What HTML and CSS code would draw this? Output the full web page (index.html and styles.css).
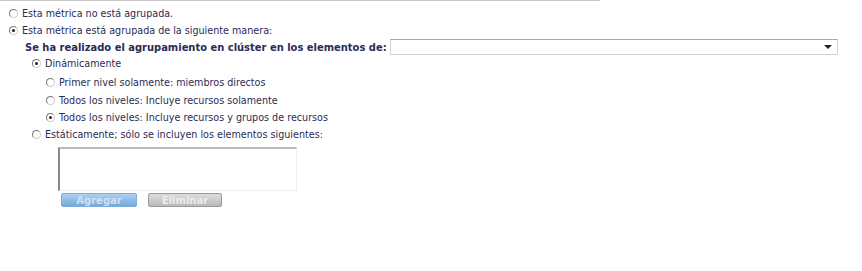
FILE: index.html
```html
<!DOCTYPE html>
<html>
<head>
<meta charset="utf-8">
<link rel="stylesheet" href="styles.css">
</head>
<body>
<div class="page">
  <div class="topline"></div>
  <div class="row r1"><span class="radio"></span><span class="lbl">Esta métrica no está agrupada.</span></div>
  <div class="row r2"><span class="radio on"></span><span class="lbl">Esta métrica está agrupada de la siguiente manera:</span></div>
  <div class="row r3"><span class="bold">Se ha realizado el agrupamiento en clúster en los elementos de:</span>
    <div class="select"><span class="arrow"></span></div>
  </div>
  <div class="row r4"><span class="radio on"></span><span class="lbl blue">Dinámicamente</span></div>
  <div class="row r5"><span class="radio"></span><span class="lbl blue">Primer nivel solamente: miembros directos</span></div>
  <div class="row r6"><span class="radio"></span><span class="lbl blue">Todos los niveles: Incluye recursos solamente</span></div>
  <div class="row r7"><span class="radio on"></span><span class="lbl blue">Todos los niveles: Incluye recursos y grupos de recursos</span></div>
  <div class="row r8"><span class="radio"></span><span class="lbl blue">Estáticamente; sólo se incluyen los elementos siguientes:</span></div>
  <div class="textarea"></div>
  <div class="buttons">
    <span class="btn add">Agregar</span>
    <span class="btn del">Eliminar</span>
  </div>
</div>
</body>
</html>
```
FILE: styles.css
```css
html, body { margin: 0; padding: 0; background: #fff; }
body { font-family: "DejaVu Sans", sans-serif; font-size: 9.6px; color: #2b2b55; }
.page { width: 862px; height: 271px; position: relative; }
.topline { width: 600px; height: 1px; background: #c8c8c8; margin-bottom: 4px; }
.row { display: flex; align-items: center; height: 17px; }
.r1 { padding-left: 9px; }
.r2 { padding-left: 9px; }
.r3 { padding-left: 25px; height: 16px; }
.r4 { padding-left: 32px; }
.r5, .r6, .r7 { padding-left: 46px; }
.r5 { margin-top: 2px; }
.r6 { height: 18px; }
.r8 { padding-left: 32px; height: 16px; }
.radio { width: 7px; height: 7px; border: 1px solid #888; border-radius: 50%; box-sizing: content-box; position: relative; margin-right: 4px; background: #fff; border-color: #777 #ccc #ccc #777; }
.radio.on::after { content: ""; position: absolute; left: 2px; top: 2px; width: 3px; height: 3px; border-radius: 50%; background: #222; }
.lbl { white-space: nowrap; }
.bold { font-weight: bold; white-space: nowrap; color: #2b2b55; font-size: 9.95px; }
.select { width: 446px; height: 14px; border: 1px solid #d2d2d2; border-top-color: #a8a8a8; margin-left: 3px; position: relative; background: #fff; }
.arrow { position: absolute; right: 5px; top: 5px; width: 0; height: 0; border-left: 4px solid transparent; border-right: 4px solid transparent; border-top: 4px solid #222; }
.textarea { width: 236px; height: 41px; margin: 5px 0 0 58px; border: 1px solid #eee; border-left: 2px solid #888; border-top: 2px solid #bbb; background: #fff; }
.buttons { display: flex; gap: 11px; margin: 2px 0 0 61px; }
.btn { display: block; height: 14px; line-height: 13px; text-align: center; font-weight: bold; font-size: 10px; box-sizing: border-box; border-radius: 2px; }
.add { width: 76px; background: linear-gradient(#add0f2, #74a9de); border: 1px solid #7fa9d6; color: #cfe0f3; }
.del { width: 74px; background: linear-gradient(#dcdcdc, #bababa); border: 1px solid #9a9a9a; color: #ececec; }
```
